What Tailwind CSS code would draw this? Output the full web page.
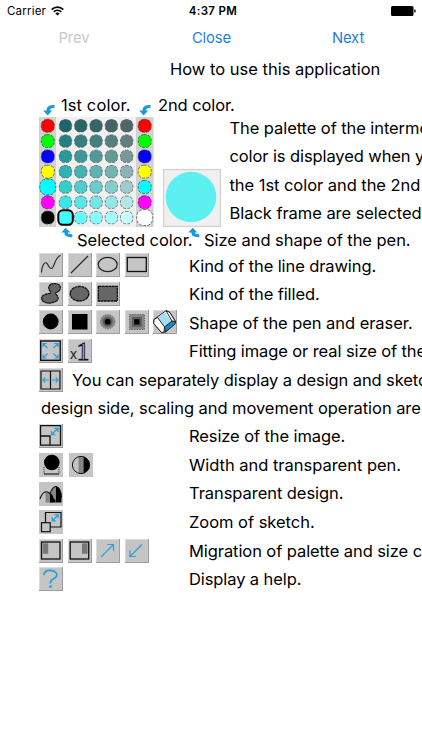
<!DOCTYPE html>
<html lang="en">
<head>
    <meta charset="UTF-8">
    <meta name="viewport" content="width=device-width, initial-scale=1.0">
    <title>How to use this application</title>
    <script src="https://cdn.jsdelivr.net/npm/@tailwindcss/browser@4"></script>
</head>
<body class="bg-white">
    <div class="w-full h-[750px] overflow-hidden bg-white text-black font-['Inter','Liberation_Sans',sans-serif] text-[16.5px] leading-[28.6px] tracking-[-0.1px] whitespace-nowrap">
        <!-- Status bar -->
        <div class="grid grid-cols-3 items-center h-[22px] pl-[7px] pr-[6px] text-[11.5px] leading-[22px] tracking-normal">
            <div class="flex items-center gap-[5px]">
                <span class="tracking-[0.2px]">Carrier</span>
                <svg class="w-[13px] h-[10px]" viewBox="0 0 13 10" fill="none" stroke="#000" stroke-width="1.7">
                    <path d="M.7 3.6C4 .2 9 .2 12.3 3.6M2.8 5.8c2.1-2.1 5.3-2.1 7.4 0" />
                    <path d="M6.5 9.6L4.3 7.4c1.2-1.1 3.2-1.1 4.4 0z" fill="#000" stroke="none" />
                </svg>
            </div>
            <div class="text-center font-semibold tracking-[0.35px] pl-[3px]">4:37 PM</div>
            <div class="flex justify-end">
                <svg class="w-[25px] h-[10px]" viewBox="0 0 25 10">
                    <rect x="0" y="0" width="22.5" height="10" rx="1.5" />
                    <path d="M23.3 3.2q1.5.3 1.5 1.8t-1.5 1.8z" />
                </svg>
            </div>
        </div>

        <!-- Navigation -->
        <div class="flex h-[32px] text-[14.8px] leading-[33px] tracking-[-0.1px] text-[#1f7de0]">
            <div class="w-[148px] text-center text-[#c8c8c8]">Prev</div>
            <div class="w-[127px] text-center">Close</div>
            <div class="w-[146px] text-center">Next</div>
        </div>

        <h1 class="h-[37px] pl-[170px] leading-[31px] tracking-[0px]">How to use this application</h1>

        <!-- Palette -->
        <div class="flex h-[26px] pl-[42px] leading-[28px]">
            <svg class="w-[13px] h-[13px] mt-[12px]" viewBox="0 0 13 13"><use href="#arrow-down" /></svg>
            <span class="w-[83px] ml-[6px] tracking-[0.1px]">1st color.</span>
            <svg class="w-[13px] h-[13px] mt-[12px] ml-[-6px]" viewBox="0 0 13 13"><use href="#arrow-down" /></svg>
            <span class="ml-[7px]">2nd color.</span>
        </div>
        <div class="flex h-[110px] pl-[39px]">
            <svg class="w-[115px] h-[110px] shrink-0" viewBox="0 0 115 110">
                <rect width="115" height="110" fill="#f0f0f0" />
                <rect width="17" height="110" fill="#d2d2d2" />
                <rect x="97" width="17.5" height="110" fill="#d2d2d2" />
                <g id="dots"></g>
            </svg>
            <svg class="w-[58px] h-[58px] ml-[9px] mt-[52px] shrink-0" viewBox="0 0 58 58">
                <rect x=".6" y=".6" width="56.8" height="56.8" fill="#f0f0f0" stroke="#d0d0d0" stroke-width="1.2" />
                <circle cx="28" cy="28" r="25.3" fill="#5cf1f0" />
            </svg>
            <div class="ml-[8.5px] mt-[-3.2px] leading-[28.4px]">
                <p class="tracking-[-0.08px]">The palette of the intermediate</p>
                <p>color is displayed when you select</p>
                <p class="tracking-[-0.05px]">the 1st color and the 2nd color.</p>
                <p class="tracking-[-0.05px]">Black frame are selected color.</p>
            </div>
        </div>
        <div class="flex h-[24px] pl-[60px] leading-[27px]">
            <svg class="w-[13px] h-[12px]" viewBox="0 0 13 12"><use href="#arrow-up" /></svg>
            <span class="w-[110px] ml-[4px] tracking-[-0.03px]">Selected color.</span>
            <svg class="w-[13px] h-[12px]" viewBox="0 0 13 12"><use href="#arrow-up" /></svg>
            <span class="ml-[4px] tracking-[-0.05px]">Size and shape of the pen.</span>
        </div>

        <!-- Tools -->
        <div class="pl-[39px]">
            <div class="flex items-center h-[28.6px]">
                <div class="flex gap-[4.5px] w-[150px] shrink-0">
                    <svg class="w-6 h-6" viewBox="0 0 24 24" fill="none"><use href="#tile" /><path d="M2.5 19.5C3 12 5.5 9 7.5 10s2 6 5 5.5S16 3.5 21.5 2.5" stroke="#222" stroke-width="1.1" /></svg>
                    <svg class="w-6 h-6" viewBox="0 0 24 24" fill="none"><use href="#tile" /><path d="M3 20L20 3" stroke="#222" stroke-width="1.1" /></svg>
                    <svg class="w-6 h-6" viewBox="0 0 24 24" fill="none"><use href="#tile" /><ellipse cx="11.7" cy="11.5" rx="9.5" ry="7.2" stroke="#222" stroke-width="1.2" /></svg>
                    <svg class="w-6 h-6" viewBox="0 0 24 24" fill="none"><use href="#tile" /><rect x="2.3" y="4.5" width="19" height="14" stroke="#111" stroke-width="1.3" /></svg>
                </div>
                <span class="pt-px">Kind of the line drawing.</span>
            </div>
            <div class="flex items-center h-[28.6px]">
                <div class="flex gap-[4.5px] w-[150px] shrink-0">
                    <svg class="w-6 h-6" viewBox="0 0 24 24"><use href="#tile" /><path d="M11.5 2.5Q15 .8 18.5 2Q22.5 3.5 21 7.5Q20 10 17 10.5Q16 11.5 18 13.5Q21 17 16.5 19.5Q11 22 6 20.5Q1.5 18 3 14.5Q5.5 11.8 11 11.5Q12.5 10.3 10.5 8.5Q8.5 5 11.5 2.5z" fill="#666" stroke="#111" stroke-width="1.2" stroke-dasharray="3 .4" /></svg>
                    <svg class="w-6 h-6" viewBox="0 0 24 24"><use href="#tile" /><ellipse cx="11.5" cy="11.7" rx="9.3" ry="7.3" fill="#666" stroke="#111" stroke-width="1.3" stroke-dasharray="3 .4" /></svg>
                    <svg class="w-6 h-6" viewBox="0 0 24 24"><use href="#tile" /><rect x="2.3" y="4.3" width="19" height="14.7" fill="#666" stroke="#111" stroke-width="1.3" stroke-dasharray="3 .4" /></svg>
                </div>
                <span>Kind of the filled.</span>
            </div>
            <div class="flex items-center h-[28.6px]">
                <div class="flex gap-[4.5px] w-[150px] shrink-0">
                    <svg class="w-6 h-6" viewBox="0 0 24 24"><use href="#tile" /><circle cx="11.7" cy="11.5" r="7.9" /></svg>
                    <svg class="w-6 h-6" viewBox="0 0 24 24"><use href="#tile" /><rect x="4" y="4" width="15.5" height="15.5" /></svg>
                    <svg class="w-6 h-6" viewBox="0 0 24 24"><use href="#tile" /><circle cx="11.7" cy="11.7" r="7.3" fill="#858585" stroke="#777" stroke-dasharray="1.3 1.3" /><circle cx="11.7" cy="11.7" r="5" fill="#5c5c5c" /><circle cx="11.7" cy="11.7" r="2.9" /></svg>
                    <svg class="w-6 h-6" viewBox="0 0 24 24"><use href="#tile" /><rect x="4.5" y="4.5" width="15" height="15" fill="#858585" stroke="#666" stroke-dasharray="1.3 1.3" /><rect x="7" y="7" width="9.8" height="9.8" fill="#5c5c5c" /><rect x="9.2" y="9.2" width="5.3" height="5.3" /></svg>
                    <svg class="w-6 h-6" viewBox="0 0 24 24"><use href="#tile" />
                        <g stroke="#111" stroke-width=".9" stroke-linejoin="round">
                            <path d="M1 9.5L13 .7l3.5 1.5 6 9.3-10 10.5-4 .5L.8 13.5z" fill="#fff" />
                            <path d="M4.3 7.8L12 2l6.5 9.5-7 5.5z" fill="#a6dff2" stroke="none" />
                            <path d="M11.5 17l7.5-6 3.5.5-.5 2.5-9.5 8z" fill="#1687c9" />
                            <path d="M1 9.5l3.5-2 7 9.5-.5 5-2.5.5L.8 13.5z" fill="#fff" />
                            <path d="M13 .7l6 10.3 3.5.5L16.5 2.2z" fill="#fff" />
                        </g>
                    </svg>
                </div>
                <span class="pt-px tracking-[-0.06px]">Shape of the pen and eraser.</span>
            </div>
            <div class="flex items-center h-[28.6px]">
                <div class="flex gap-[4.5px] w-[150px] shrink-0">
                    <svg class="w-6 h-6" viewBox="0 0 24 24" fill="none"><use href="#tile" /><rect x="1.7" y="2" width="19.5" height="19.3" stroke="#111" stroke-width="1.4" /><path d="M8.5 9L4 4.5M4 8V4.5h3.5M14.5 9L19 4.5M15.5 4.5H19V8M8.5 14.5L4 19M4 15.5V19h3.5M14.5 14.5L19 19M15.5 19H19v-3.5" stroke="#2b9fd6" stroke-width="1.2" /></svg>
                    <svg class="w-6 h-6" viewBox="0 0 24 24"><use href="#tile" /><text x="2" y="20" font-family="Liberation Sans" font-size="14" fill="#222" letter-spacing="0">x</text><text x="8.5" y="20.7" font-family="Liberation Serif" font-size="26" fill="#bbb" stroke="#111" stroke-width=".9" letter-spacing="0">1</text></svg>
                </div>
                <span class="pt-px">Fitting image or real size of the image.</span>
            </div>
            <div class="flex items-center h-[28.6px]">
                <svg class="w-6 h-6 mr-[9px] shrink-0" viewBox="0 0 24 24" fill="none"><use href="#tile" /><path d="M2 3h19v18H2zM11.5 3v18" stroke="#111" stroke-width="1.2" /><path d="M10 12H3.8M6.3 9.5L3.8 12l2.5 2.5M13 12h6.2M16.700 9.5l2.5 2.5-2.5 2.5" stroke="#2b9fd6" stroke-width="1.1" /></svg>
                <span class="pt-px">You can separately display a design and sketch. In the</span>
            </div>
            <p class="h-[28.4px] pl-[2px] tracking-[-0.06px]">design side, scaling and movement operation are possible.</p>
            <div class="flex items-center h-[28px]">
                <div class="flex gap-[4.5px] w-[150px] shrink-0">
                    <svg class="w-6 h-6" viewBox="0 0 24 24" fill="none"><use href="#tile" /><path d="M1.5 1.7h20v19.5h-20zM1.5 12h9.5v9" stroke="#111" stroke-width="1.3" /><path d="M12.8 10.5l6-6M15.3 4.3H19V8M12.5 7v3.7h3.7" stroke="#2b9fd6" stroke-width="1.3" /></svg>
                </div>
                <span>Resize of the image.</span>
            </div>
            <div class="flex items-center h-[29px]">
                <div class="flex gap-[5.5px] w-[150px] shrink-0">
                    <svg class="w-6 h-6" viewBox="0 0 24 24" fill="none"><use href="#flat" /><circle cx="12.8" cy="9.5" r="7.8" fill="#000" /><path d="M5 21h15" stroke="#222" stroke-width="1.2" /><path d="M5 14v7M20 14v7" stroke="#333" stroke-dasharray="1.2 1" /></svg>
                    <svg class="w-6 h-6" viewBox="0 0 24 24" fill="none"><use href="#flat" /><path d="M9.5 3.5h5v17h-5z" fill="#858585" /><path d="M14.5 3.8a8.6 8.6 0 0 1 0 16.5z" fill="#000" /><circle cx="12" cy="12" r="8.6" stroke="#111" /></svg>
                </div>
                <span class="tracking-[-0.02px]">Width and transparent pen.</span>
            </div>
            <div class="flex items-center h-[28.7px]">
                <div class="flex gap-[4.5px] w-[150px] shrink-0">
                    <svg class="w-6 h-6" viewBox="0 0 24 24" fill="none"><use href="#flat" /><path d="M11 20.5V11q2.5-6.5 6-6.5v16z" fill="#858585" /><path d="M17 4.5q5 .5 5.5 10v6H17z" fill="#000" /><path d="M6.5 9.8q3.5-.5 5 1.7v9h-5z" fill="#858585" /><path d="M11 11q3 1.5 3.5 5.5l2 1.5v2.5H11z" fill="#000" /><path d="M1 17Q3.5 9.5 7.5 9.8q2 0 3.5 2 2.5-7.3 6-7.3 5 1 5.5 11" stroke="#111" stroke-width="1.1" /></svg>
                </div>
                <span class="tracking-[-0.06px]">Transparent design.</span>
            </div>
            <div class="flex items-center h-[28.6px]">
                <div class="flex gap-[4.5px] w-[150px] shrink-0">
                    <svg class="w-6 h-6" viewBox="0 0 24 24" fill="none"><use href="#flat" /><path d="M6.5 12.5v-10h15.5v14.5H11" stroke="#111" stroke-width="1.2" /><rect x="2.5" y="12.7" width="8.7" height="9" stroke="#111" stroke-width="1.2" /><path d="M13.5 10.5l5.5-5.5M15.7 4.7h3.5v3.5M13.3 7.3v3.5h3.5" stroke="#2b9fd6" stroke-width="1.3" /></svg>
                </div>
                <span class="tracking-[-0.03px]">Zoom of sketch.</span>
            </div>
            <div class="flex items-center h-[28.5px]">
                <div class="flex gap-[4.5px] w-[150px] shrink-0">
                    <svg class="w-6 h-6" viewBox="0 0 24 24" fill="none"><use href="#tile" /><rect x="2.5" y="3" width="18.5" height="17" stroke="#111" stroke-width="1.3" /><rect x="3.7" y="4.3" width="5.5" height="10.5" fill="#777" /></svg>
                    <svg class="w-6 h-6" viewBox="0 0 24 24" fill="none"><use href="#tile" /><rect x="2.2" y="3" width="18.5" height="17" stroke="#111" stroke-width="1.3" /><rect x="14" y="4.3" width="5.5" height="10.5" fill="#777" /></svg>
                    <svg class="w-6 h-6" viewBox="0 0 24 24" fill="none"><use href="#tile" /><path d="M5 18L17.5 5.5M11.5 5.5H17.5V12" stroke="#2b9fd6" stroke-width="1.2" /></svg>
                    <svg class="w-6 h-6" viewBox="0 0 24 24" fill="none"><use href="#tile" /><path d="M17 5.5L5 17.5M5 11.5v6h6" stroke="#2b9fd6" stroke-width="1.2" /></svg>
                </div>
                <span class="tracking-[-0.08px]">Migration of palette and size change.</span>
            </div>
            <div class="flex items-center h-[28.5px]">
                <div class="flex gap-[4.5px] w-[150px] shrink-0">
                    <svg class="w-6 h-6" viewBox="0 0 24 24" fill="none"><use href="#tile" /><path d="M4.7 8Q5.5 3.3 11 3.3T18 7.5Q18 10 14.5 11.8T11.5 16.5" stroke="#2b9fd6" stroke-width="1.7" /><circle cx="11.5" cy="19.7" r="1.4" fill="#2b9fd6" /></svg>
                </div>
                <span>Display a help.</span>
            </div>
        </div>
    </div>

    <!-- Shared shapes -->
    <svg class="hidden">
        <symbol id="tile" viewBox="0 0 24 24">
            <rect width="24" height="24" fill="#9c9c9c" />
            <rect width="22.8" height="22.8" fill="#dadada" />
            <rect x="1" y="1" width="21.8" height="21.8" fill="#c5c5c5" />
        </symbol>
        <symbol id="flat" viewBox="0 0 24 24">
            <rect width="24" height="24" fill="#c5c5c5" />
        </symbol>
        <symbol id="arrow-down" viewBox="0 0 13 13">
            <path d="M12.5 2V4.8Q8.3 4.5 8 7.5H10.3L5.6 12.5 1.2 7.5H4.5Q4.5 1.5 12.5 2z" fill="#1a9ad6" />
        </symbol>
        <symbol id="arrow-up" viewBox="0 0 13 12">
            <path d="M5.8 .8L10.3 5.6H7.8Q7.8 7.5 12.3 7.3V10.2Q4.5 10.8 4.3 5.6H1.3z" fill="#1a9ad6" />
        </symbol>
    </svg>

    <script>
        const side = ['#ff0000', '#00ff00', '#0000ff', '#ffff00', '#00ffff', '#ff00ff'];
        const left = [...side, '#000000'];
        const right = [...side, '#ffffff'];
        let html = '';

        function dot(x, y, r, color, stroke) {
            return `<rect x="${x - r}" y="${y - r}" width="${r * 2}" height="${r * 2}" rx="${r * 0.85}" fill="${color}" stroke="${stroke}" stroke-width=".7" stroke-dasharray="3 1.3" />`;
        }

        for (let row = 0; row < 7; row++) {
            const y = 8.8 + row * 15.3;
            // the chosen color of each side is drawn larger
            html += dot(8.8, y, row === 4 ? 8 : 6.5, left[row], '#444');
            html += dot(105.7, y, row === 6 ? 8 : 6.5, right[row], '#444');
            const v = 102 + row * 25.5;
            for (let col = 0; col < 5; col++) {
                const r = Math.round(v * (0.26 + col * 0.13));
                html += dot(26.5 + col * 15.3, y, 6.2, `rgb(${r}, ${Math.round(v)}, ${Math.round(v)})`, '#555');
            }
        }
        // frame of the selected color
        html += '<rect x="19.3" y="93.3" width="14.5" height="14.5" rx="4.5" fill="#40ffff" stroke="#000" stroke-width="2" />';
        document.getElementById('dots').innerHTML = html;
    </script>
</body>
</html>
